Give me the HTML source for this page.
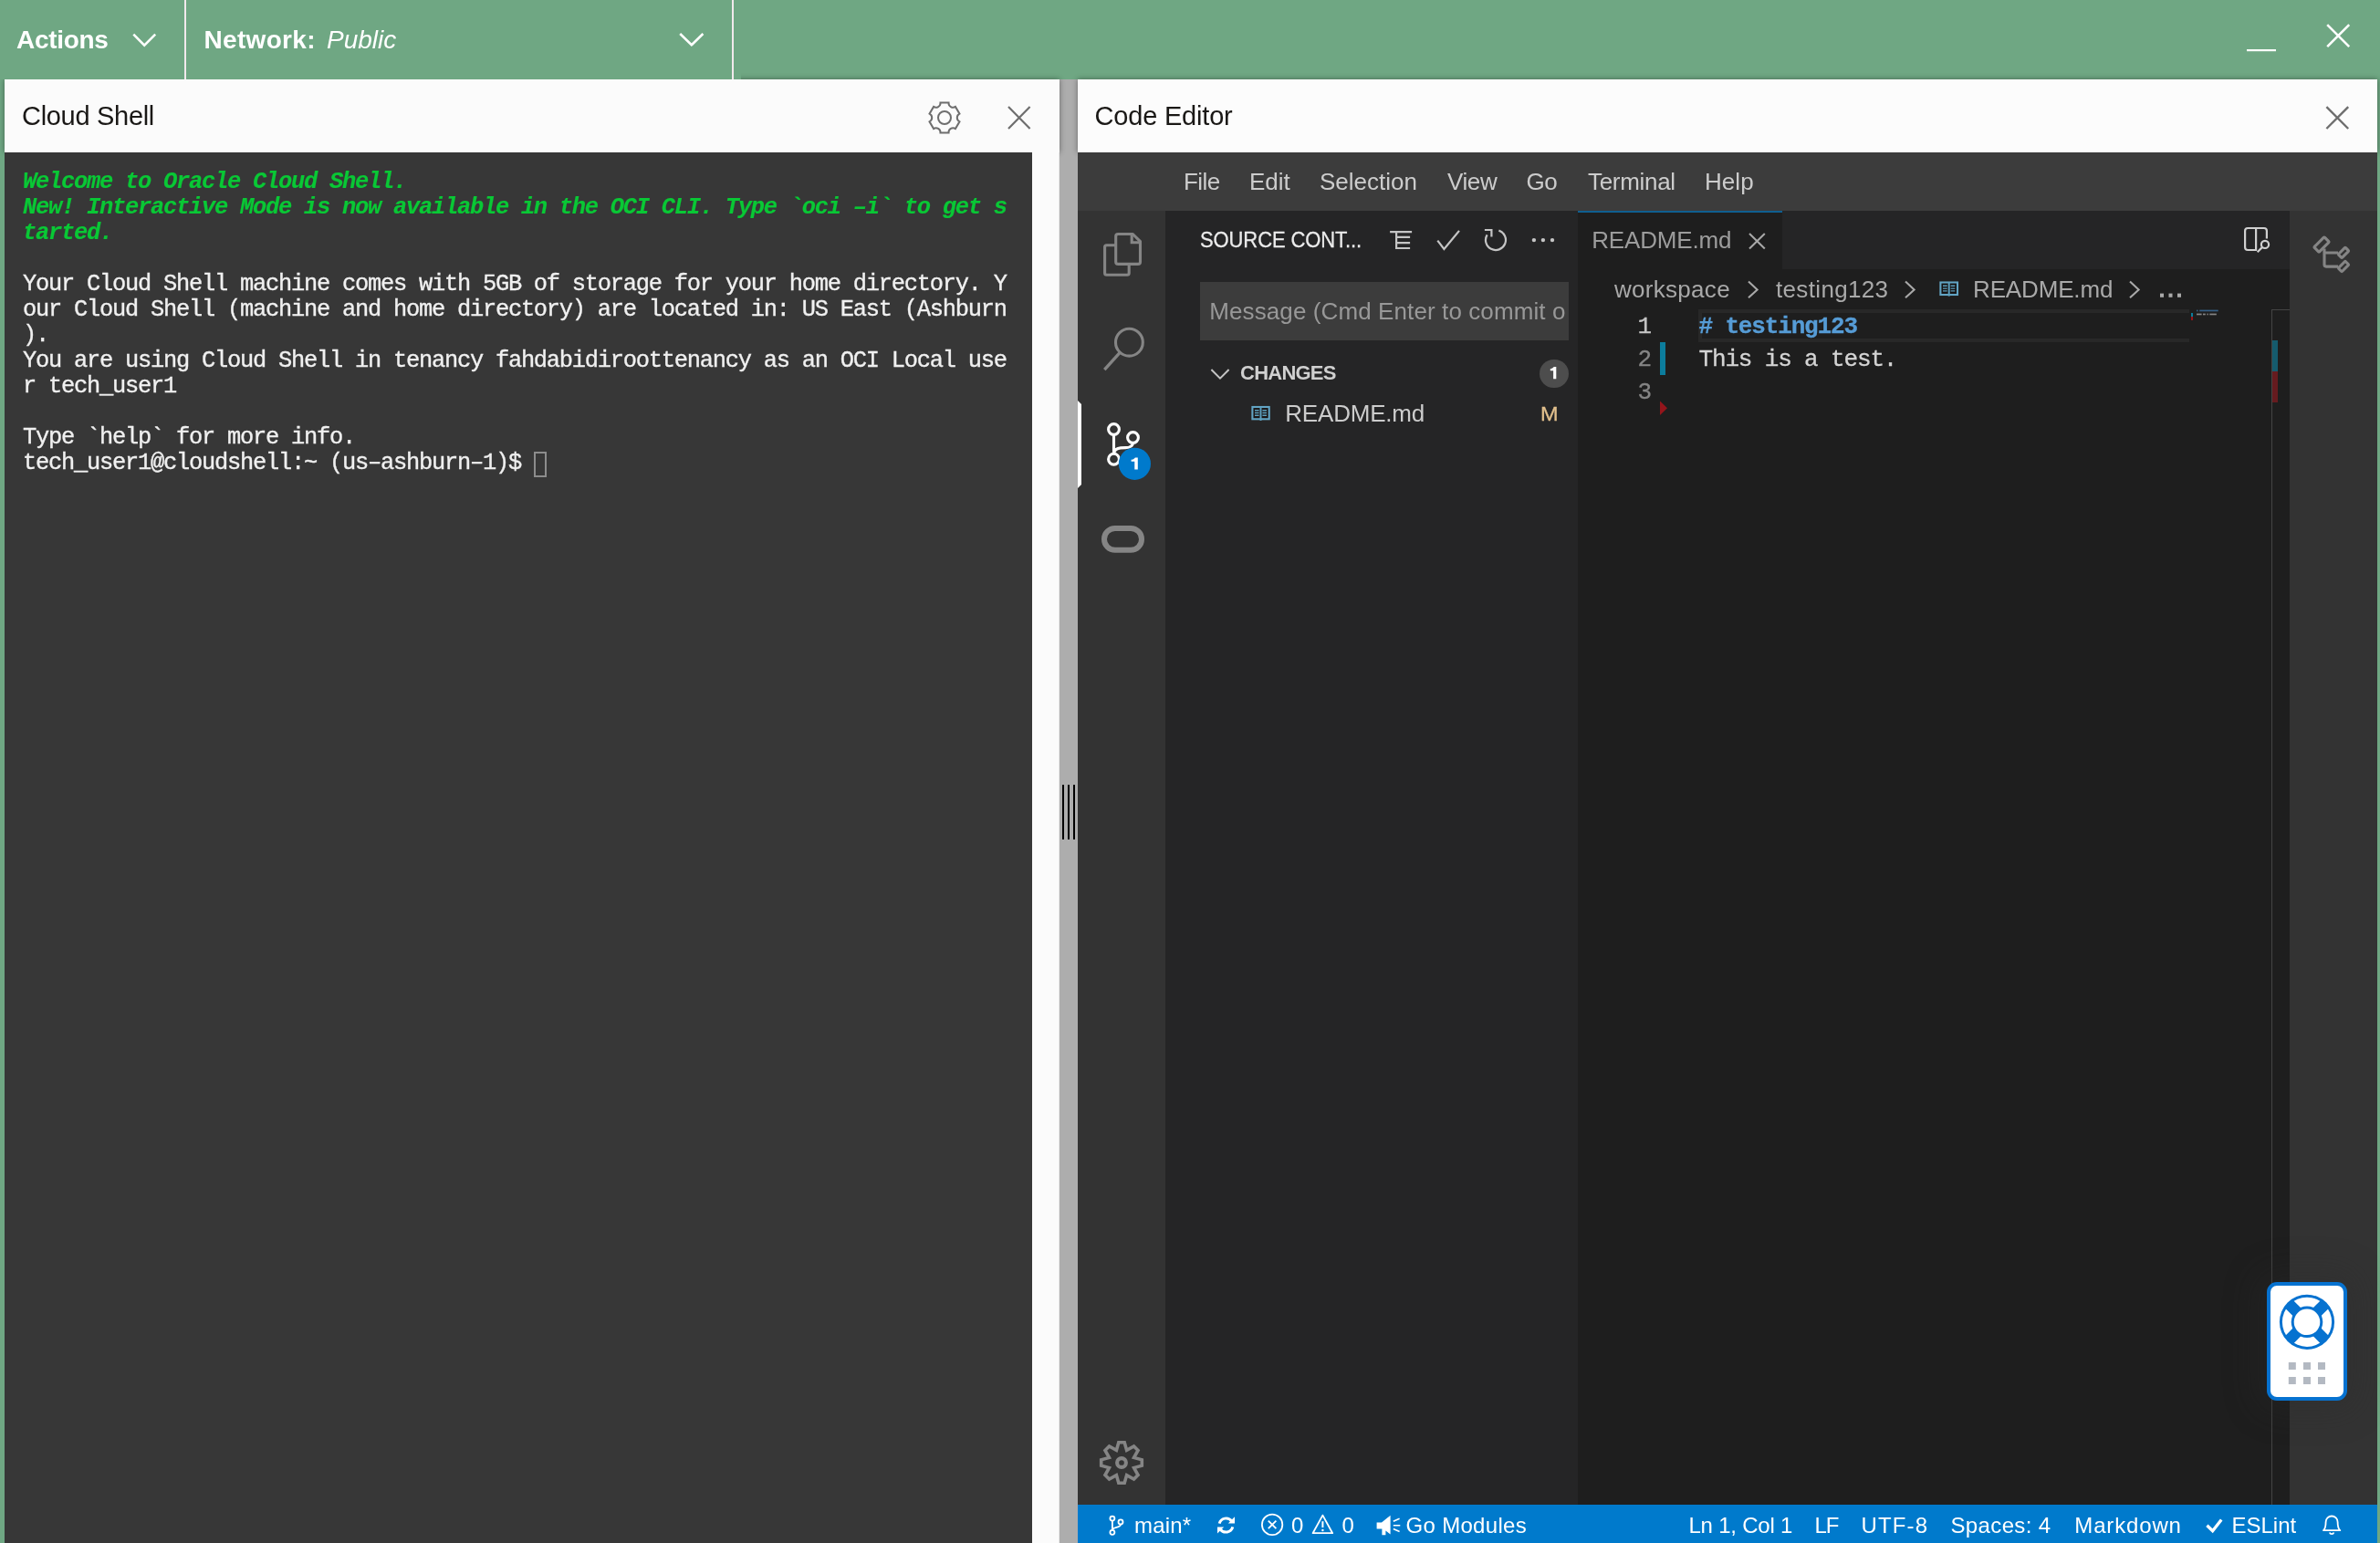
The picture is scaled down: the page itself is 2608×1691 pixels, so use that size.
<!DOCTYPE html>
<html>
<head>
<meta charset="utf-8">
<title>Cloud Shell</title>
<style>
html,body{margin:0;padding:0;}
body{width:2608px;height:1691px;overflow:hidden;background:#6fa783;position:relative;font-family:"Liberation Sans",sans-serif;}
.a{position:absolute;}
.t{position:absolute;white-space:pre;line-height:1;}
svg{position:absolute;overflow:visible;}
/* top bar */
#topbar{left:0;top:0;width:2608px;height:87px;background:#6fa783;}
.tb{color:#fff;font-size:28px;}
/* panels */
#lp{left:5px;top:87px;width:1156px;height:1604px;background:#fbfbfb;}
#term{left:5px;top:167px;width:1126px;height:1524px;background:#373737;}
#split{left:1161px;top:87px;width:20px;height:1604px;background:#adadad;}
#rp{left:1181px;top:87px;width:1424px;height:1604px;background:#fcfcfc;}
.hd{color:#1a1816;font-size:29px;letter-spacing:-0.3px;}
/* terminal */
.tl{position:absolute;left:25px;white-space:pre;font-family:"Liberation Mono",monospace;font-size:25.4px;letter-spacing:-1.24px;line-height:28px;height:28px;color:#f0f0f0;-webkit-text-stroke:0.35px #f0f0f0;}
.tg{color:#09c835;font-weight:bold;font-style:italic;-webkit-text-stroke:0.15px #09c835;}
/* vscode */
#menubar{left:1181px;top:167px;width:1424px;height:64px;background:#3c3c3c;}
#actbar{left:1181px;top:231px;width:96px;height:1418px;background:#333333;}
#sidebar{left:1277px;top:231px;width:452px;height:1418px;background:#252526;}
#editor{left:1729px;top:231px;width:780px;height:1418px;background:#1e1e1e;}
#tabs{left:1729px;top:231px;width:780px;height:64px;background:#252526;}
#tab{left:1729px;top:231px;width:224px;height:64px;background:#1e1e1e;border-top:2px solid #0f5f91;box-sizing:border-box;}
#rbar{left:2509px;top:231px;width:96px;height:1418px;background:#333333;}
#status{left:1181px;top:1649px;width:1424px;height:42px;background:#007acc;}
.mi{color:#cccccc;font-size:26px;}
.st{color:#ffffff;font-size:24px;}
.code{font-family:"Liberation Mono",monospace;font-size:26px;letter-spacing:-1.15px;-webkit-text-stroke:0.3px currentColor;}
</style>
</head>
<body>
<div id="root" style="position:absolute;left:0;top:0;width:2608px;height:1691px;will-change:transform;">
<!-- TOP BAR -->
<div class="a" id="topbar"></div>
<!-- PANELS -->
<div class="a" id="split"></div>
<div class="a" style="left:5px;top:87px;width:1156px;height:80px;box-shadow:0 0 6px rgba(0,0,0,0.42);"></div>
<div class="a" style="left:1181px;top:87px;width:1424px;height:80px;box-shadow:0 0 6px rgba(0,0,0,0.42);"></div>
<div class="a" style="left:1160px;top:167px;width:1px;height:1524px;background:#ebebeb;z-index:1;"></div>
<div class="a" id="lp"></div>
<div class="a" id="term"></div>
<div class="a" id="rp"></div>
<span class="t hd" style="left:24px;top:112.5px;">Cloud Shell</span>
<span class="t hd" style="left:1199.6px;top:112.5px;letter-spacing:-0.2px;">Code Editor</span>


<div class="a" style="left:0;top:0;width:812px;height:87px;background:#6fa783;"></div>
<div class="a" style="left:202px;top:0;width:2px;height:87px;background:#f1e9ec;"></div>
<div class="a" style="left:802px;top:0;width:2px;height:87px;background:#f1e9ec;"></div>
<span class="t tb" style="left:18px;top:29.5px;font-weight:bold;letter-spacing:-0.3px;">Actions</span>
<span class="t tb" style="left:223.6px;top:29.5px;font-weight:bold;letter-spacing:0.3px;">Network:</span>
<span class="t tb" style="left:358px;top:29.5px;font-style:italic;">Public</span>

<!-- TOPBAR + HEADER ICONS -->
<svg class="a" style="left:0;top:0;" width="2608" height="170" viewBox="0 0 2608 170" fill="none">
 <polyline points="146.3,37.6 158.2,49.6 170.2,37.6" stroke="#fff" stroke-width="2.6"/>
 <polyline points="745.2,37 757.8,49.3 770.4,37" stroke="#fff" stroke-width="2.6"/>
 <rect x="2462" y="54" width="32" height="2.2" fill="#fff"/>
 <path d="M2550.2,27.2 L2574.2,51.2 M2574.2,27.2 L2550.2,51.2" stroke="#fff" stroke-width="2.6"/>
 <path d="M2549.4,117.2 L2573.2,141 M2573.2,117.2 L2549.4,141" stroke="#6e6e6e" stroke-width="2.4"/>
 <path d="M1105,117.1 L1128.6,140.9 M1128.6,117.1 L1105,140.9" stroke="#6e6e6e" stroke-width="2.2"/>
 <path d="M1051.46,124.70 A4.8,4.8 0 0 0 1051.46,133.30 L1046.95,141.10 A4.8,4.8 0 0 0 1039.51,145.40 L1030.49,145.40 A4.8,4.8 0 0 0 1023.05,141.10 L1018.54,133.30 A4.8,4.8 0 0 0 1018.54,124.70 L1023.05,116.90 A4.8,4.8 0 0 0 1030.49,112.60 L1039.51,112.60 A4.8,4.8 0 0 0 1046.95,116.90 Z" stroke="#6e6e6e" stroke-width="2"/>
 <circle cx="1035" cy="129" r="7" stroke="#6e6e6e" stroke-width="2"/>
</svg>

<!-- SPLIT HANDLE -->
<div class="a" style="left:1164px;top:860px;width:2px;height:60px;background:#000;"></div>
<div class="a" style="left:1170px;top:860px;width:2px;height:60px;background:#000;"></div>
<div class="a" style="left:1176px;top:860px;width:2px;height:60px;background:#000;"></div>

<!-- TERMINAL TEXT -->
<div id="tt" class="a" style="left:0;top:0.8px;">
<div class="tl tg" style="top:185px;">Welcome to Oracle Cloud Shell.</div>
<div class="tl tg" style="top:213px;">New! Interactive Mode is now available in the OCI CLI. Type `oci –i` to get s</div>
<div class="tl tg" style="top:241px;">tarted.</div>
<div class="tl" style="top:297px;">Your Cloud Shell machine comes with 5GB of storage for your home directory. Y</div>
<div class="tl" style="top:325px;">our Cloud Shell (machine and home directory) are located in: US East (Ashburn</div>
<div class="tl" style="top:353px;">).</div>
<div class="tl" style="top:381px;">You are using Cloud Shell in tenancy fahdabidiroottenancy as an OCI Local use</div>
<div class="tl" style="top:409px;">r tech_user1</div>
<div class="tl" style="top:465px;">Type `help` for more info.</div>
<div class="tl" style="top:493px;">tech_user1@cloudshell:~ (us–ashburn–1)$ </div>
</div>
<div class="a" style="left:585px;top:495px;width:14px;height:28px;box-sizing:border-box;border:2px solid #8c8c8c;"></div>

<!-- VSCODE -->
<div class="a" id="menubar"></div>
<div class="a" id="actbar"></div>
<div class="a" id="sidebar"></div>
<div class="a" id="editor"></div>
<div class="a" id="tabs"></div>
<div class="a" id="tab"></div>
<div class="a" id="rbar"></div>
<div class="a" id="status"></div>


<!-- MENUBAR -->
<span class="t mi" style="left:1297px;top:186.3px;letter-spacing:-0.6px;">File</span>
<span class="t mi" style="left:1369px;top:186.3px;">Edit</span>
<span class="t mi" style="left:1446px;top:186.3px;">Selection</span>
<span class="t mi" style="left:1586px;top:186.3px;letter-spacing:-0.4px;">View</span>
<span class="t mi" style="left:1672.5px;top:186.3px;letter-spacing:-0.4px;">Go</span>
<span class="t mi" style="left:1740px;top:186.3px;letter-spacing:-0.3px;">Terminal</span>
<span class="t mi" style="left:1868px;top:186.3px;letter-spacing:0.05px;">Help</span>

<!-- ACTIVITY BAR -->
<div class="a" style="left:1181px;top:439px;width:4px;height:96px;background:#ffffff;clip-path:polygon(0 0,100% 4px,100% 92px,0 100%);"></div>
<svg class="a" style="left:1181px;top:231px;" width="96" height="1418" viewBox="1181 231 96 1418" fill="none">
 <!-- files -->
 <path d="M1222.7,268.8 H1212.6 a2,2 0 0 0 -2,2 V299.2 a2,2 0 0 0 2,2 H1235.2 a2,2 0 0 0 2,-2 V290.5" stroke="#858585" stroke-width="3.1"/>
 <path d="M1225.2,256.5 H1241.3 L1249.5,264.7 V286.9 a2.5,2.5 0 0 1 -2.5,2.5 H1225.2 a2.5,2.5 0 0 1 -2.5,-2.5 V259 a2.5,2.5 0 0 1 2.5,-2.5 Z" stroke="#858585" stroke-width="3.1" stroke-linejoin="round"/>
 <path d="M1240.2,257 V265.8 H1249" stroke="#858585" stroke-width="3.1"/>
 <!-- search -->
 <circle cx="1237.4" cy="375.2" r="14.9" stroke="#858585" stroke-width="3.1"/>
 <path d="M1227.2,386.3 L1210.3,405.2" stroke="#858585" stroke-width="3.4"/>
 <!-- scm -->
 <circle cx="1220.5" cy="470.5" r="5.9" stroke="#fff" stroke-width="3.1"/>
 <circle cx="1241.5" cy="479.5" r="5.9" stroke="#fff" stroke-width="3.1"/>
 <circle cx="1220.5" cy="503.2" r="5.9" stroke="#fff" stroke-width="3.1"/>
 <path d="M1220.5,476.4 V497.3" stroke="#fff" stroke-width="3.1"/>
 <path d="M1241.5,485.2 C1241.3,489.4 1238,490.5 1233.5,490.6 L1228,490.9 C1224,491.3 1221.4,493 1220.7,496.4" stroke="#fff" stroke-width="3.1"/>
 <circle cx="1243.4" cy="508.3" r="17.6" fill="#007acc"/>
 <!-- oracle O -->
 <rect x="1210" y="579" width="41" height="23.8" rx="11.9" stroke="#858585" stroke-width="6"/>
 <!-- gear -->
 <path d="M1225.80,1580.70 L1232.20,1580.70 L1234.63,1589.42 L1242.51,1584.97 L1247.03,1589.49 L1242.58,1597.37 L1251.30,1599.80 L1251.30,1606.20 L1242.58,1608.63 L1247.03,1616.51 L1242.51,1621.03 L1234.63,1616.58 L1232.20,1625.30 L1225.80,1625.30 L1223.37,1616.58 L1215.49,1621.03 L1210.97,1616.51 L1215.42,1608.63 L1206.70,1606.20 L1206.70,1599.80 L1215.42,1597.37 L1210.97,1589.49 L1215.49,1584.97 L1223.37,1589.42 Z" stroke="#858585" stroke-width="3.6" stroke-linejoin="miter"/>
 <circle cx="1229" cy="1603" r="4.9" stroke="#858585" stroke-width="4.1"/>
</svg>
<svg class="a" style="left:1230px;top:495px;" width="28" height="28" viewBox="1230 495 28 28"><path d="M1243.27,501.60 L1246.80,501.60 L1246.80,514.50 L1243.27,514.50 L1243.27,505.73 L1239.60,505.73 L1239.60,503.79 L1241.62,503.41 L1243.20,502.37 L1243.92,501.60 Z" fill="#fff"/></svg>

<!-- SIDEBAR -->
<span class="t" style="left:1315px;top:253.4px;font-size:22px;color:#ececec;letter-spacing:-0.1px;-webkit-text-stroke:0.25px #ececec;transform:scaleY(1.07);transform-origin:0 84.65%;">SOURCE CONT...</span>
<svg class="a" style="left:1500px;top:240px;" width="220" height="50" viewBox="1500 240 220 50" fill="none">
 <path d="M1523.1,254.1 H1547.1 M1530.1,253 V273.1 M1529,259.9 H1545.1 M1529,266.1 H1545.1 M1529,272 H1545.1" stroke="#c5c5c5" stroke-width="2.2"/>
 <polyline points="1575.3,263.6 1582.4,273 1599,252.9" stroke="#c5c5c5" stroke-width="2.2"/>
 <path d="M1642.4,252.6 A11,11 0 1 1 1629.6,257.3" stroke="#c5c5c5" stroke-width="2.2"/>
 <polyline points="1626.9,252 1634.4,252 1634.4,259.4" stroke="#c5c5c5" stroke-width="2.2"/>
 <circle cx="1680.9" cy="263.1" r="2.2" fill="#c5c5c5"/><circle cx="1690.9" cy="263.1" r="2.2" fill="#c5c5c5"/><circle cx="1701" cy="263.1" r="2.2" fill="#c5c5c5"/>
</svg>
<div class="a" style="left:1315px;top:309px;width:404px;height:64px;background:#3c3c3c;overflow:hidden;">
 <span class="t" style="left:10.3px;top:19px;font-size:26px;color:#989898;letter-spacing:0.1px;">Message (Cmd Enter to commit o</span>
</div>
<svg class="a" style="left:1320px;top:395px;" width="80" height="80" viewBox="1320 395 80 80" fill="none">
 <polyline points="1327.4,405 1337,414.6 1346.6,405" stroke="#c5c5c5" stroke-width="2"/>
 <rect x="1372.4" y="446" width="18.3" height="13.3" fill="#1a1515" stroke="#62a4c4" stroke-width="2.1"/>
 <path d="M1381.5,446 V461" stroke="#5da0bf" stroke-width="2"/>
 <path d="M1375,449.7 H1379.6 M1375,452.5 H1379.6 M1375,455.3 H1379.6 M1383.4,449.7 H1388 M1383.4,452.5 H1388 M1383.4,455.3 H1388" stroke="#5da0bf" stroke-width="1.4"/>
</svg>
<span class="t" style="left:1359px;top:398.3px;font-size:22px;font-weight:bold;color:#d0d0d0;letter-spacing:-0.76px;">CHANGES</span>
<div class="a" style="left:1687px;top:394px;width:32px;height:31px;border-radius:16px;background:#4d4d4d;"></div>
<svg class="a" style="left:1690px;top:396px;" width="26" height="26" viewBox="1690 396 26 26"><path d="M1702.12,402.00 L1705.30,402.00 L1705.30,415.30 L1702.12,415.30 L1702.12,406.26 L1698.80,406.26 L1698.80,404.26 L1700.62,403.86 L1702.05,402.80 L1702.70,402.00 Z" fill="#fff"/></svg>
<span class="t" style="left:1408.3px;top:439.7px;font-size:26px;color:#cccccc;letter-spacing:-0.2px;">README.md</span>
<span class="t" style="left:1687.6px;top:442.6px;font-size:22.4px;color:#e2c08d;-webkit-text-stroke:0.3px #e2c08d;transform:scaleX(1.05);transform-origin:0 0;">M</span>


<!-- EDITOR -->
<span class="t" style="left:1744.2px;top:250.3px;font-size:26px;color:#9c9c9c;letter-spacing:-0.15px;">README.md</span>
<svg class="a" style="left:1729px;top:231px;" width="876" height="260" viewBox="1729 231 876 260" fill="none">
 <path d="M1917,256 L1933.8,272.4 M1933.8,256 L1917,272.4" stroke="#a8a8a8" stroke-width="2.1"/>
 <!-- open preview -->
 <path d="M2472.1,250 H2463.1 a3,3 0 0 0 -3,3 V271 a3,3 0 0 0 3,3 H2472.1 V250 H2480.9 a3,3 0 0 1 3,3 V261.5" stroke="#d0d0d0" stroke-width="2.2"/>
 <circle cx="2482" cy="267.9" r="4.1" stroke="#d0d0d0" stroke-width="2.2"/>
 <path d="M2478.8,271.1 L2473.7,276.2" stroke="#d0d0d0" stroke-width="2.2"/>
 <!-- right bar icon -->
 <g stroke="#858585" stroke-width="3.1" stroke-linejoin="round">
  <rect x="-7.9" y="-3.8" width="15.8" height="7.6" rx="1" transform="translate(2544,268) rotate(-45)"/>
  <rect x="-5.45" y="-2.75" width="10.9" height="5.5" rx="0.8" transform="translate(2568,276.9) rotate(-45)"/>
  <rect x="-5.45" y="-2.75" width="10.9" height="5.5" rx="0.8" transform="translate(2568,292) rotate(-45)"/>
  <path d="M2547,272.5 V290.1 a2,2 0 0 0 2,2 H2562 M2547,277 H2562"/>
 </g>
 <!-- breadcrumb chevrons -->
 <g stroke="#a9a9a9" stroke-width="2.1">
  <polyline points="1916,308.6 1925.6,317.4 1916,326.2"/>
  <polyline points="2088,308.6 2097.6,317.4 2088,326.2"/>
  <polyline points="2334,308.6 2343.6,317.4 2334,326.2"/>
 </g>
 <rect x="2367" y="321.6" width="4" height="4.2" fill="#a9a9a9"/><rect x="2376.5" y="321.6" width="4" height="4.2" fill="#a9a9a9"/><rect x="2386" y="321.6" width="4" height="4.2" fill="#a9a9a9"/>
 <!-- breadcrumb file icon -->
 <rect x="2126.4" y="309.5" width="18.6" height="13.5" fill="#161212" stroke="#62a4c4" stroke-width="2.1"/>
 <path d="M2135.7,309.5 V324.6" stroke="#5da0bf" stroke-width="2"/>
 <path d="M2129,313.3 H2133.7 M2129,316.1 H2133.7 M2129,318.9 H2133.7 M2137.6,313.3 H2142.3 M2137.6,316.1 H2142.3 M2137.6,318.9 H2142.3" stroke="#5da0bf" stroke-width="1.4"/>
 <!-- modified gutter + deleted arrow -->
 <rect x="1819" y="375" width="6" height="36" fill="#0c7d9d"/>
 <path d="M1819,439.5 L1827,447.2 L1819,455 Z" fill="#94151b"/>
 <!-- minimap bits -->
 <rect x="2401" y="343" width="2" height="4" fill="#0c7d9d"/><rect x="2401" y="347" width="2" height="4" fill="#94151b"/>
 <rect x="2407" y="339.6" width="1.5" height="1.7" fill="#355f86"/><rect x="2410.2" y="339.6" width="20.5" height="1.7" fill="#355f86"/>
 <rect x="2407" y="343.6" width="5.6" height="1.7" fill="#858585"/><rect x="2414" y="343.6" width="2.8" height="1.7" fill="#858585"/><rect x="2418.4" y="343.6" width="1.4" height="1.7" fill="#858585"/><rect x="2421.3" y="343.6" width="7.5" height="1.7" fill="#858585"/>
 <!-- overview ruler -->
 <rect x="2490" y="373" width="6" height="34" fill="#155b6d"/>
 <rect x="2490" y="407" width="6" height="34" fill="#661b1f"/>
</svg>
<!-- current line highlight -->
<div class="a" style="left:1861px;top:339px;width:538px;height:36px;box-sizing:border-box;border:4px solid #282828;border-right:none;"></div>
<div class="a" style="left:2489px;top:339px;width:1px;height:1310px;background:#444444;"></div>
<div class="a" style="left:2489px;top:339px;width:20px;height:1px;background:#444444;"></div>
<span class="t" style="left:1769px;top:304.3px;font-size:26px;color:#a9a9a9;letter-spacing:0.29px;">workspace</span>
<span class="t" style="left:1946px;top:304.3px;font-size:26px;color:#a9a9a9;letter-spacing:0.34px;">testing123</span>
<span class="t" style="left:2162px;top:304.3px;font-size:26px;color:#a9a9a9;letter-spacing:-0.15px;">README.md</span>
<span class="t code" style="left:1794.4px;top:345.1px;color:#c6c6c6;">1</span>
<span class="t code" style="left:1794.4px;top:381.1px;color:#858585;">2</span>
<span class="t code" style="left:1794.4px;top:417.1px;color:#858585;">3</span>
<span class="t code" style="left:1861.5px;top:345.1px;color:#569cd6;font-weight:bold;"># testing123</span>
<span class="t code" style="left:1861.5px;top:381.1px;color:#d4d4d4;">This is a test.</span>

<!-- STATUS BAR -->
<svg class="a" style="left:1181px;top:1649px;" width="1424" height="42" viewBox="1181 1649 1424 42" fill="none" stroke="#fff">
 <!-- branch -->
 <circle cx="1218.9" cy="1664.1" r="2.5" stroke-width="1.8"/>
 <circle cx="1228" cy="1667.9" r="2.5" stroke-width="1.8"/>
 <circle cx="1218.9" cy="1679.3" r="2.5" stroke-width="1.8"/>
 <path d="M1218.9,1666.6 V1676.8 M1228,1670.4 C1228,1674.5 1220.5,1673 1219,1676" stroke-width="1.8"/>
 <!-- sync -->
 <path d="M1336.2,1669.6 A7.6,7.6 0 0 1 1349.6,1667" stroke-width="3"/>
 <path d="M1350.8,1673.4 A7.6,7.6 0 0 1 1337.2,1675.8" stroke-width="3"/>
 <path d="M1353,1662.3 V1669.6 H1345.8 Z" fill="#fff" stroke="none"/>
 <path d="M1334,1680.6 V1673.4 H1341.2 Z" fill="#fff" stroke="none"/>
 <!-- error -->
 <circle cx="1394.1" cy="1670.9" r="11.2" stroke-width="1.8"/>
 <path d="M1389.8,1666.6 L1398.4,1675.2 M1398.4,1666.6 L1389.8,1675.2" stroke-width="1.8"/>
 <!-- warning -->
 <path d="M1449.4,1660.6 L1460.2,1680.2 H1438.6 Z" stroke-width="1.8" stroke-linejoin="round"/>
 <path d="M1449.4,1667.2 V1674" stroke-width="2"/><circle cx="1449.4" cy="1677" r="1.2" fill="#fff" stroke="none"/>
 <!-- megaphone -->
 <path d="M1508.6,1668.6 H1514 L1523.6,1660.8 V1681.6 L1518.4,1677.4 V1682.2 H1514.4 V1675.4 H1508.6 Z" fill="#fff" stroke="none"/>
 <path d="M1526.8,1667.2 L1533.6,1664.2 M1526.8,1671.7 H1534.3 M1526.8,1675.4 L1533.6,1678.4" stroke-width="1.6"/>
 <!-- check -->
 <polyline points="2418.4,1671.8 2424.6,1677.8 2434.2,1665.6" stroke-width="3.3"/>
 <!-- bell -->
 <path d="M2546,1677.2 H2564.3 C2561.8,1675.2 2561.6,1673 2561.6,1668 A6.5,6.5 0 0 0 2548.6,1668 C2548.6,1673 2548.4,1675.2 2546,1677.2 Z" stroke-width="1.8" stroke-linejoin="round"/>
 <path d="M2552.8,1679.4 A2.4,2.4 0 0 0 2557.4,1679.4" stroke-width="1.8"/>
</svg>
<span class="t st" style="left:1243px;top:1659.6px;letter-spacing:0.2px;">main*</span>
<span class="t st" style="left:1415px;top:1659.6px;">0</span>
<span class="t st" style="left:1470.4px;top:1659.6px;">0</span>
<span class="t st" style="left:1540.5px;top:1659.6px;letter-spacing:0.32px;">Go Modules</span>
<span class="t st" style="left:1850.5px;top:1659.6px;letter-spacing:-0.23px;">Ln 1, Col 1</span>
<span class="t st" style="left:1988.5px;top:1659.6px;letter-spacing:-1px;">LF</span>
<span class="t st" style="left:2039.6px;top:1659.6px;letter-spacing:1.1px;">UTF-8</span>
<span class="t st" style="left:2137.5px;top:1659.6px;letter-spacing:0.36px;">Spaces: 4</span>
<span class="t st" style="left:2273.3px;top:1659.6px;letter-spacing:0.85px;">Markdown</span>
<span class="t st" style="left:2445.5px;top:1659.6px;">ESLint</span>

<!-- HELP BUTTON -->
<div class="a" style="left:2484px;top:1405px;width:88px;height:130px;box-sizing:border-box;border:4px solid #0672d0;border-radius:11px;background:#fff;box-shadow:0 0 34px 14px rgba(42,42,42,0.28);"></div>
<svg class="a" style="left:2484px;top:1405px;" width="88" height="130" viewBox="2484 1405 88 130" fill="none">
 <circle cx="2528" cy="1448.8" r="30.1" fill="#0672d0"/>
 <circle cx="2528" cy="1448.8" r="27.1" fill="#fff"/>
 <rect x="-29" y="-6.2" width="58" height="12.4" fill="#0672d0" transform="translate(2528,1448.8) rotate(45)"/>
 <rect x="-29" y="-6.2" width="58" height="12.4" fill="#0672d0" transform="translate(2528,1448.8) rotate(-45)"/>
 <circle cx="2528" cy="1448.8" r="17.3" fill="#0672d0"/>
 <circle cx="2528" cy="1448.8" r="14.3" fill="#fff"/>
 <g fill="#b3b9c2">
  <rect x="2507.8" y="1493" width="8" height="8"/><rect x="2524" y="1493" width="8" height="8"/><rect x="2540" y="1493" width="8" height="8"/>
  <rect x="2507.8" y="1509" width="8" height="8"/><rect x="2524" y="1509" width="8" height="8"/><rect x="2540" y="1509" width="8" height="8"/>
 </g>
</svg>


</div>
</body>
</html>
